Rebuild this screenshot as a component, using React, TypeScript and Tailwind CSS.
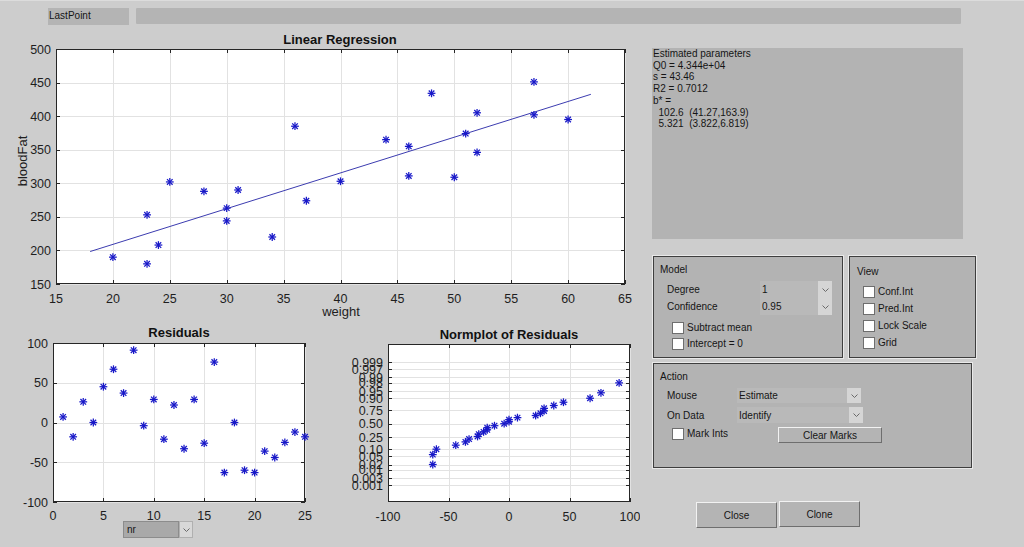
import React from "react";

const F = '"Liberation Sans", Arial, Helvetica, sans-serif';

type Tick = { p: number; l: string };

function Star({ x, y }: { x: number; y: number }) {
  const r = 3.9;
  const d = 2.8;
  return (
    <g>
      <line x1={x - r} y1={y} x2={x + r} y2={y} />
      <line x1={x} y1={y - r} x2={x} y2={y + r} />
      <line x1={x - d} y1={y - d} x2={x + d} y2={y + d} />
      <line x1={x - d} y1={y + d} x2={x + d} y2={y - d} />
    </g>
  );
}

function Axes({
  x0,
  y0,
  x1,
  y1,
  xt,
  yt,
  xg = true,
  yg = true,
  xlOff = 18,
}: {
  x0: number;
  y0: number;
  x1: number;
  y1: number;
  xt: Tick[];
  yt: Tick[];
  xg?: boolean;
  yg?: boolean;
  xlOff?: number;
}) {
  const c = (v: number) => Math.round(v) + 0.5;
  return (
    <g>
      <rect x={x0} y={y0} width={x1 - x0} height={y1 - y0} fill="#ffffff" />
      {xg &&
        xt.map((t, i) => (
          <line key={"xg" + i} x1={c(t.p)} x2={c(t.p)} y1={y0} y2={y1} stroke="#e2e2e2" />
        ))}
      {yg &&
        yt.map((t, i) => (
          <line key={"yg" + i} y1={c(t.p)} y2={c(t.p)} x1={x0} x2={x1} stroke="#e2e2e2" />
        ))}
      <g stroke="#262626" strokeWidth={1}>
        {xt.map((t, i) => (
          <g key={"xt" + i}>
            <line x1={c(t.p)} x2={c(t.p)} y1={y1} y2={y1 - 4} />
            <line x1={c(t.p)} x2={c(t.p)} y1={y0} y2={y0 + 4} />
          </g>
        ))}
        {yt.map((t, i) => (
          <g key={"yt" + i}>
            <line y1={c(t.p)} y2={c(t.p)} x1={x0} x2={x0 + 4} />
            <line y1={c(t.p)} y2={c(t.p)} x1={x1} x2={x1 - 4} />
          </g>
        ))}
        <rect x={x0 + 0.5} y={y0 + 0.5} width={x1 - x0 - 1} height={y1 - y0 - 1} fill="none" />
      </g>
      <g fill="#1e1e1e" fontSize={12.5} fontFamily={F}>
        {xt.map((t, i) => (
          <text key={"xl" + i} x={t.p} y={y1 + xlOff} textAnchor="middle">
            {t.l}
          </text>
        ))}
        {yt.map((t, i) => (
          <text key={"yl" + i} x={x0 - 5} y={t.p + 4.5} textAnchor="end">
            {t.l}
          </text>
        ))}
      </g>
    </g>
  );
}

/* ---------- main regression plot ---------- */
const MX = (w: number) => 56 + (w - 15) * 11.38;
const MY = (b: number) => 49 + (500 - b) * (235 / 350);
const mainPts: [number, number][] = [
  [20, 190], [23, 253], [23, 180], [24, 208], [25, 302], [28, 288], [30, 263], [30, 244],
  [31, 290], [34, 220], [36, 385], [37, 274], [40, 303], [44, 365], [46, 355], [46, 311],
  [48, 434], [50, 309], [51, 374], [52, 405], [52, 346], [57, 451], [57, 402], [60, 395],
];

function MainPlot() {
  const xt: Tick[] = [15, 20, 25, 30, 35, 40, 45, 50, 55, 60, 65].map((v) => ({ p: MX(v), l: String(v) }));
  const yt: Tick[] = [150, 200, 250, 300, 350, 400, 450, 500].map((v) => ({ p: MY(v), l: String(v) }));
  return (
    <svg width={640} height={292} viewBox="0 28 640 292" className="block">
      <text x={340} y={44} textAnchor="middle" fontFamily={F} fontSize={13} fontWeight="bold" fill="#111">
        Linear Regression
      </text>
      <Axes x0={56} y0={49} x1={625} y1={284} xt={xt} yt={yt} xlOff={18.5} />
      <line
        x1={MX(18)}
        y1={MY(102.6 + 5.321 * 18)}
        x2={MX(62)}
        y2={MY(102.6 + 5.321 * 62)}
        stroke="#3c3cb0"
        strokeWidth={1}
      />
      <g stroke="#1818c8" strokeWidth={1.25}>
        {mainPts.map(([w, b], i) => (
          <Star key={i} x={MX(w)} y={MY(b)} />
        ))}
      </g>
      <text x={341} y={316} textAnchor="middle" fontFamily={F} fontSize={13} fill="#1e1e1e">
        weight
      </text>
      <text
        transform="translate(27 161) rotate(-90)"
        textAnchor="middle"
        fontFamily={F}
        fontSize={13}
        fill="#1e1e1e"
      >
        bloodFat
      </text>
    </svg>
  );
}

/* ---------- residuals ---------- */
const residuals = [7, -18, 26, 0, 45, 67, 37, 91, -4, 29, -21, 22, -33, 29, -26, 76, -63, 0, -60, -63, -36, -44, -25, -12, -18];
const RX = (n: number) => 53 + n * (252 / 25);
const RY = (r: number) => 343 + (100 - r) * (159 / 200);

function ResidualPlot() {
  const xt: Tick[] = [0, 5, 10, 15, 20, 25].map((v) => ({ p: RX(v), l: String(v) }));
  const yt: Tick[] = [-100, -50, 0, 50, 100].map((v) => ({ p: RY(v), l: String(v) }));
  return (
    <svg width={330} height={201} viewBox="0 320 330 201" className="block">
      <text x={179} y={337} textAnchor="middle" fontFamily={F} fontSize={13} fontWeight="bold" fill="#111">
        Residuals
      </text>
      <Axes x0={53} y0={343} x1={305} y1={502} xt={xt} yt={yt} xlOff={17.5} />
      <g stroke="#1818c8" strokeWidth={1.25}>
        {residuals.map((r, i) => (
          <Star key={i} x={RX(i + 1)} y={RY(r)} />
        ))}
      </g>
    </svg>
  );
}

/* ---------- normplot ---------- */
const NX = (r: number) => 388 + (r + 100) * 1.21;
const NY = (z: number) => 423.7 - z * 19.87;
const zq = [
  -2.054, -1.555, -1.2816, -1.0803, -0.9154, -0.7722, -0.6433, -0.5244, -0.4125, -0.3055, -0.2019, -0.1004, 0,
  0.1004, 0.2019, 0.3055, 0.4125, 0.5244, 0.6433, 0.7722, 0.9154, 1.0803, 1.2816, 1.555, 2.054,
];
const probTicks: [string, number][] = [
  ["0.001", -3.09], ["0.003", -2.748], ["0.01", -2.326], ["0.02", -2.054], ["0.05", -1.645],
  ["0.10", -1.2816], ["0.25", -0.6745], ["0.50", 0], ["0.75", 0.6745], ["0.90", 1.2816],
  ["0.95", 1.645], ["0.98", 2.054], ["0.99", 2.326], ["0.997", 2.748], ["0.999", 3.09],
];

function NormPlot() {
  const sorted = [...residuals].sort((a, b) => a - b);
  const xt: Tick[] = [-100, -50, 0, 50, 100].map((v) => ({ p: NX(v), l: String(v) }));
  const yt: Tick[] = probTicks.map(([l, z]) => ({ p: NY(z), l }));
  return (
    <svg width={310} height={227} viewBox="330 320 310 227" className="block">
      <text x={509} y={339} textAnchor="middle" fontFamily={F} fontSize={13} fontWeight="bold" fill="#111">
        Normplot of Residuals
      </text>
      <Axes x0={388} y0={344} x1={630} y1={502} xt={xt} yt={yt} xlOff={19} />
      <g stroke="#1818c8" strokeWidth={1.25}>
        {sorted.map((r, i) => (
          <Star key={i} x={NX(r)} y={NY(zq[i])} />
        ))}
      </g>
    </svg>
  );
}

/* ---------- controls ---------- */
function Chevron() {
  return (
    <svg width={7} height={4} viewBox="0 0 7 4" className="block">
      <polyline points="0.5,0.5 3.5,3.5 6.5,0.5" fill="none" stroke="#6a6a6a" strokeWidth={1} />
    </svg>
  );
}

function Select({ w, h, value }: { w: string; h: string; value: string }) {
  return (
    <div className={`flex ${w} ${h} bg-[#b9b9b9]`}>
      <div className="flex-1 flex items-center pl-[2px] text-[10px] text-[#151515]">{value}</div>
      <div className="w-[14px] bg-[#d5d5d5] flex items-center justify-center">
        <Chevron />
      </div>
    </div>
  );
}

function Check({ label }: { label?: string }) {
  return (
    <div className="flex items-center gap-[3px] h-[12px]">
      <div className="w-[12px] h-[12px] bg-white border border-[#6e6e6e]" />
      {label && <span className="text-[10px] leading-[12px] text-[#151515]">{label}</span>}
    </div>
  );
}

function Button({ label, cls }: { label: string; cls: string }) {
  return (
    <div
      className={`${cls} bg-[#b4b4b4] border border-t-[#f2f2f2] border-l-[#f2f2f2] border-b-[#6e6e6e] border-r-[#6e6e6e] flex items-center justify-center text-[10px] text-[#151515]`}
    >
      {label}
    </div>
  );
}

const panel = "bg-[#b3b3b3] border border-[#3e3e3e] shadow-[0_0_0_1px_#e9e9e9]";

export default function App() {
  return (
    <div
      className="w-[1024px] h-[547px] bg-[#cdcdcd] overflow-hidden flex flex-col border-t border-[#dcdcdc]"
      style={{ fontFamily: F }}
    >
      {/* top bar */}
      <div className="h-[27px] flex items-start pt-[7px] pl-[48px] gap-[7px] shrink-0">
        <div className="w-[81px] h-[17px] bg-[#b4b4b4] text-[10px] leading-[15px] pl-[1px] text-[#151515]">
          LastPoint
        </div>
        <div className="w-[825px] h-[16px] bg-[#b4b4b4] rounded-[1px]" />
      </div>

      <div className="flex flex-1">
        {/* plots */}
        <div className="w-[640px] flex flex-col shrink-0">
          <MainPlot />
          <div className="flex">
            <div className="w-[330px] flex flex-col">
              <ResidualPlot />
              <div className="ml-[123px] flex w-[70px] h-[17px]">
                <div className="flex-1 bg-[#a9a9a9] border border-[#8c8c8c] text-[10px] leading-[15px] pl-[3px] text-[#151515]">
                  nr
                </div>
                <div className="w-[14px] bg-[#d8d8d8] border border-[#b0b0b0] flex items-center justify-center">
                  <Chevron />
                </div>
              </div>
            </div>
            <NormPlot />
          </div>
        </div>

        {/* right column */}
        <div className="flex-1 flex flex-col pl-[12px] pt-[20px]">
          <div className="w-[311px] h-[191px] bg-[#b3b3b3] text-[10px] leading-[11.7px] pl-[1px] text-[#151515] whitespace-pre">
            {"Estimated parameters\nQ0 = 4.344e+04\ns = 43.46\nR2 = 0.7012\nb* =\n  102.6  (41.27,163.9)\n  5.321  (3.822,6.819)"}
          </div>

          <div className="mt-[17px] ml-[1px] flex gap-[6px]">
            {/* Model */}
            <div className={`w-[190px] h-[102px] ${panel} flex flex-col pt-[7px] pl-[6px]`}>
              <div className="text-[10px] leading-[12px] text-[#151515]">Model</div>
              <div className="mt-[5px] flex h-[17px] items-center">
                <div className="w-[100px] pl-[7px] text-[10px] text-[#151515]">Degree</div>
                <Select w="w-[72px]" h="h-[17px]" value="1" />
              </div>
              <div className="flex h-[17px] items-center">
                <div className="w-[100px] pl-[7px] text-[10px] text-[#151515]">Confidence</div>
                <Select w="w-[72px]" h="h-[17px]" value="0.95" />
              </div>
              <div className="mt-[7px] ml-[12px] flex flex-col gap-[4px]">
                <Check label="Subtract mean" />
                <Check label="Intercept = 0" />
              </div>
            </div>
            {/* View */}
            <div className={`w-[127px] h-[102px] ${panel} flex flex-col pt-[9px] pl-[7px]`}>
              <div className="text-[10px] leading-[12px] text-[#151515]">View</div>
              <div className="mt-[8px] ml-[6px] flex flex-col gap-[5px]">
                <Check label="Conf.Int" />
                <Check label="Pred.Int" />
                <Check label="Lock Scale" />
                <Check label="Grid" />
              </div>
            </div>
          </div>

          {/* Action */}
          <div className={`mt-[5px] ml-[1px] w-[319px] h-[105px] ${panel} flex flex-col pt-[7px] pl-[6px]`}>
            <div className="text-[10px] leading-[12px] text-[#151515]">Action</div>
            <div className="mt-[5px] flex h-[15px] items-center">
              <div className="w-[77px] pl-[7px] text-[10px] text-[#151515]">Mouse</div>
              <Select w="w-[124px]" h="h-[15px]" value="Estimate" />
            </div>
            <div className="mt-[4px] flex h-[16px] items-center">
              <div className="w-[77px] pl-[7px] text-[10px] text-[#151515]">On Data</div>
              <Select w="w-[126px]" h="h-[16px]" value="Identify" />
            </div>
            <div className="mt-[4px] flex items-start">
              <div className="w-[118px] pl-[12px] pt-[1px]">
                <Check label="Mark Ints" />
              </div>
              <Button label="Clear Marks" cls="w-[104px] h-[16px]" />
            </div>
          </div>

          {/* bottom buttons */}
          <div className="mt-[33px] ml-[44px] flex gap-[2px] items-start">
            <Button label="Close" cls="w-[81px] h-[26px] mt-[1px]" />
            <Button label="Clone" cls="w-[81px] h-[26px]" />
          </div>
        </div>
      </div>
    </div>
  );
}
